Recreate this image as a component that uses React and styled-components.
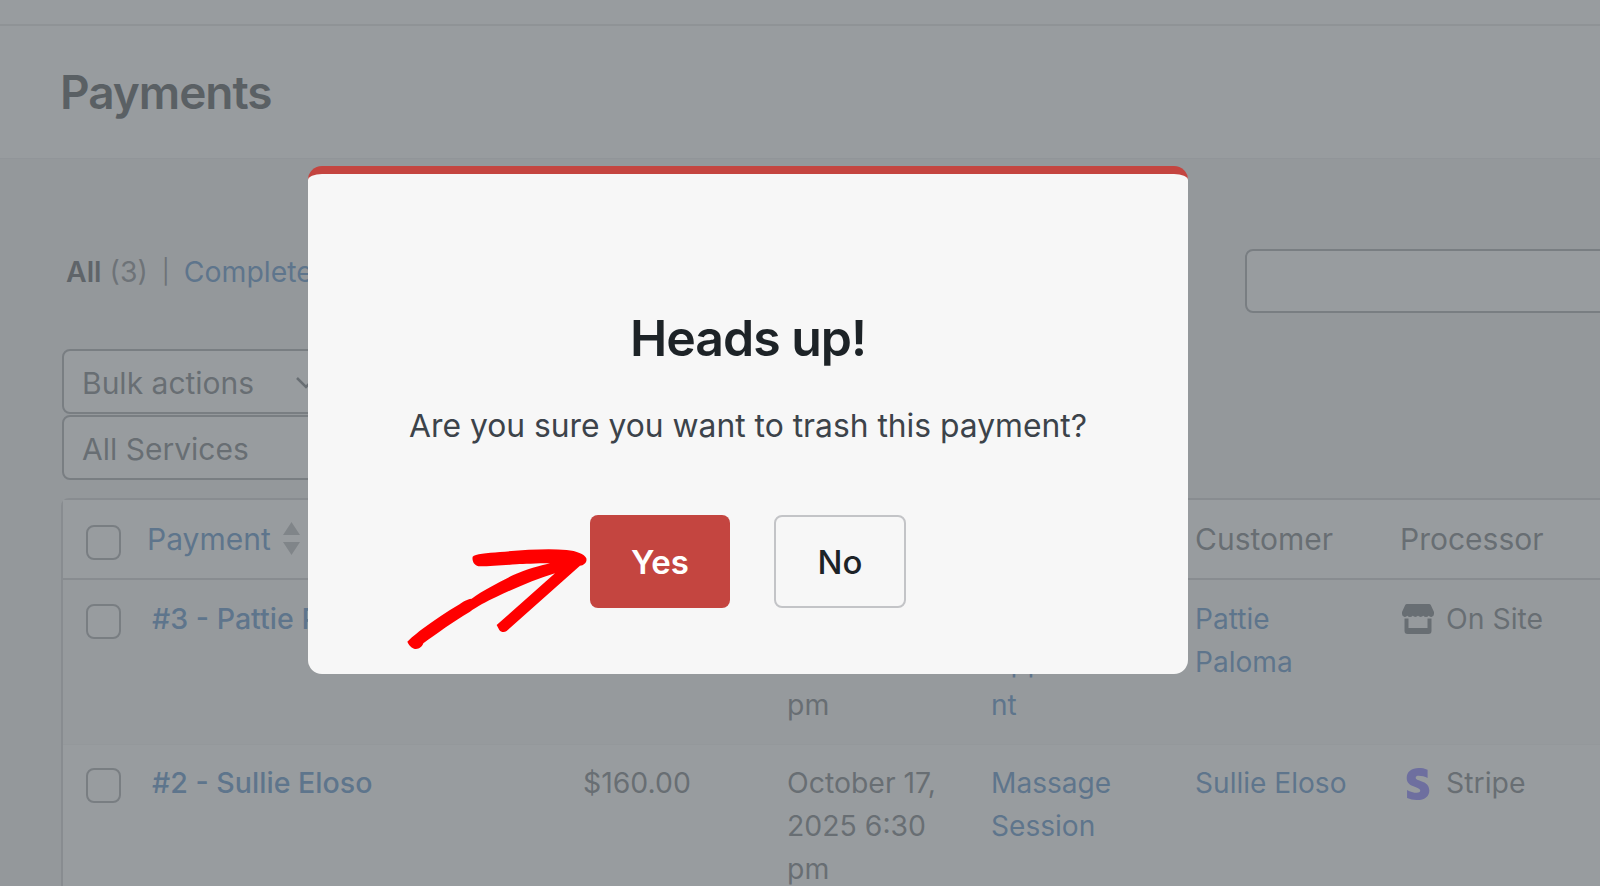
import React from "react";
import styled, { createGlobalStyle } from "styled-components";
import { FaStripeS } from "react-icons/fa";

const GlobalStyle = createGlobalStyle`
  html, body {
    margin: 0;
    padding: 0;
    height: 100%;
    overflow: hidden;
    background: #f0f0f1;
  }
  * {
    box-sizing: border-box;
  }
`;

const Page = styled.div`
  position: relative;
  width: 1600px;
  height: 886px;
  overflow: hidden;
  background: #f0f0f1;
  color: #50575e;
  font-family: Inter, "Liberation Sans", sans-serif;
  font-size: 28.4px;
  line-height: 43px;
`;

const TopBar = styled.div`
  height: 26px;
  background: #fff;
  border-bottom: 2px solid #dcdcde;
`;

const Header = styled.header`
  display: flex;
  align-items: center;
  height: 133px;
  padding: 1px 0 0 60px;
  background: #fff;
  border-bottom: 1px solid #e6e6e8;
`;

const Title = styled.h1`
  margin: 0;
  font-size: 46px;
  font-weight: 600;
  letter-spacing: -1.05px;
  line-height: 1.2;
  color: #1d2327;
`;

const Content = styled.main`
  width: 1660px;
  padding: 90px 15px 0 61px;
`;

const FilterRow = styled.div`
  display: flex;
  align-items: center;
  justify-content: space-between;
  height: 64px;
`;

const Views = styled.div`
  display: flex;
  align-items: center;
  gap: 14px;
  padding: 0 0 20px 5px;
`;

const Strong = styled.strong`
  font-weight: 600;
  color: #2c3338;
`;

const Muted = styled.span`
  color: #646970;
`;

const Divider = styled.span`
  font-size: 24px;
  color: #646970;
`;

const Link = styled.a`
  color: #2a6fb8;
  text-decoration: none;
`;

const Search = styled.div`
  width: 400px;
  height: 64px;
  background: #fff;
  border: 2px solid #8c8f94;
  border-radius: 8px;
`;

const Selects = styled.div`
  display: flex;
  flex-direction: column;
  gap: 1px;
  margin: 36px 0 0 1px;
`;

const Select = styled.div`
  display: flex;
  align-items: center;
  justify-content: space-between;
  width: 273px;
  height: 65px;
  padding: 3px 16px 0 18px;
  font-size: 30px;
  background: #fff;
  border: 2px solid #8c8f94;
  border-radius: 8px;
  color: #50575e;
`;

const Table = styled.section`
  margin-top: 18px;
  background: #fff;
  border: 2px solid #c3c4c7;
  border-radius: 8px;
`;

const Row = styled.div`
  display: grid;
  grid-template-columns: 84px 436px 204px 204px 204px 205px 1fr;
  height: ${(p) => p.$height}px;
  padding-top: ${(p) => p.$top}px;
  border-bottom: ${(p) => (p.$head ? "2px solid #c3c4c7" : "1px solid #f0f0f1")};
  background: ${(p) => (p.$shade ? "#f8f8f8" : "#fff")};
`;

const CheckCell = styled.div`
  padding: 7px 0 0 23px;
`;

const Box = styled.span`
  display: block;
  width: 35px;
  height: 35px;
  background: #fff;
  border: 2px solid #8c8f94;
  border-radius: 8px;
`;

const HeadCell = styled.div`
  display: flex;
  align-items: flex-start;
  gap: 12px;
  font-size: 30px;
  white-space: nowrap;
  color: #50575e;
`;

const Cell = styled.div`
  padding-right: ${(p) => p.$pad || 40}px;
  overflow-wrap: anywhere;
`;

const LinkCell = styled(Cell)`
  padding-top: 1px;
  font-size: 28.1px;
`;

const TitleCell = styled(Cell)`
  padding-left: 5px;
  font-size: 28.6px;
  font-weight: 500;
`;

const Processor = styled.div`
  display: flex;
  align-items: flex-start;
  gap: 12px;
  padding-left: 2px;
  white-space: nowrap;
`;

const IconSlot = styled.span`
  display: flex;
  margin-top: 7px;
  color: ${(p) => p.$color};
`;

const Overlay = styled.div`
  position: absolute;
  inset: 0;
  display: flex;
  justify-content: center;
  padding: 166px 104px 0 0;
  background: rgba(114, 119, 123, 0.73);
`;

const Modal = styled.div`
  position: relative;
  display: flex;
  flex-direction: column;
  align-items: center;
  width: 880px;
  height: 508px;
  padding-top: 132px;
  background: #f7f7f7;
  border-top: 8px solid #c44540;
  border-radius: 14px;
`;

const ModalTitle = styled.h2`
  margin: 0;
  font-size: 50px;
  font-weight: 600;
  letter-spacing: -1px;
  line-height: 64px;
  color: #1d2327;
`;

const ModalText = styled.p`
  margin: 32px 0 0;
  font-size: 31.8px;
  line-height: 48px;
  color: #3c434a;
`;

const Buttons = styled.div`
  display: flex;
  gap: 44px;
  margin-top: 65px;
`;

const Button = styled.button`
  width: ${(p) => p.$width}px;
  height: 93px;
  padding: 0;
  font-family: inherit;
  font-size: 33px;
  font-weight: ${(p) => (p.$danger ? 600 : 500)};
  color: ${(p) => (p.$danger ? "#fff" : "#1d2327")};
  background: ${(p) => (p.$danger ? "#c44540" : "transparent")};
  border: ${(p) => (p.$danger ? "none" : "2px solid #c3c4c7")};
  border-radius: 8px;
`;

const ArrowMark = styled.svg`
  position: absolute;
  left: 82px;
  top: 326px;
  width: 240px;
  height: 160px;
`;

const SortMark = styled.svg`
  margin-top: 4px;
  fill: #a7aaad;
`;

const SortIcon = () => (
  <SortMark width="17" height="34" viewBox="0 0 17 34">
    <path d="M8.5 0 17 13H0z" />
    <path d="M0 20h17L8.5 33z" />
  </SortMark>
);

const Chevron = () => (
  <svg width="22" height="14" viewBox="0 0 22 14" fill="none" stroke="#50575e" strokeWidth="2.5">
    <path d="M2 2l9 9 9-9" />
  </svg>
);

const StoreIcon = () => (
  <svg width="32" height="30" viewBox="0 0 32 30" fill="currentColor">
    <path d="M5 0h22a2 2 0 0 1 1.8 1.1L32 8v2a3 3 0 0 1-5.3 1.8 3.6 3.6 0 0 1-5.4 0 3.6 3.6 0 0 1-5.3 0 3.6 3.6 0 0 1-5.3 0 3.6 3.6 0 0 1-5.4 0A3 3 0 0 1 0 10V8l3.2-6.9A2 2 0 0 1 5 0z" />
    <path
      fillRule="evenodd"
      d="M2.500 14.500h4v9.500h19v-9.500h4V27a3 3 0 0 1-3 3h-21a3 3 0 0 1-3-3z"
    />
  </svg>
);

const Arrow = () => (
  <ArrowMark viewBox="0 0 240 160">
    <path
      transform="scale(0.3333)"
      fill="#ff0000"
      d="M248 170C255 162 290 159 330 156C400 150 470 145 530 150C560 153 583 162 589 175C592 186 582 196 570 197L350 393C343 398 333 397 328 390L320 375L495 220C440 237 380 262 320 290C290 304 260 320 240 335C190 365 140 400 100 430C96 442 85 449 72 446C62 443 55 433 52 425C70 408 85 396 100 385C135 360 170 335 205 315C215 308 228 298 245 296C280 270 330 245 370 225C410 208 450 197 480 190C440 190 400 192 380 193C340 196 300 199 270 199C255 199 245 185 248 170z"
    />
  </ArrowMark>
);

export default function App() {
  return (
    <Page>
      <GlobalStyle />
      <TopBar />
      <Header>
        <Title>Payments</Title>
      </Header>
      <Content>
        <FilterRow>
          <Views>
            <span>
              <Strong>All</Strong> <Muted>(3)</Muted>
            </span>
            <Divider>|</Divider>
            <Link>Completed</Link>
          </Views>
          <Search />
        </FilterRow>
        <Selects>
          <Select>
            Bulk actions
            <Chevron />
          </Select>
          <Select>All Services</Select>
        </Selects>
        <Table>
          <Row $head $height={80} $top={18}>
            <CheckCell>
              <Box />
            </CheckCell>
            <HeadCell>
              <Link>Payment</Link>
              <SortIcon />
            </HeadCell>
            <HeadCell />
            <HeadCell />
            <HeadCell />
            <HeadCell>Customer</HeadCell>
            <HeadCell>Processor</HeadCell>
          </Row>
          <Row $height={165} $top={17} $shade>
            <CheckCell>
              <Box />
            </CheckCell>
            <TitleCell>
              <Link>#3 - Pattie Paloma</Link>
            </TitleCell>
            <Cell>$120.00</Cell>
            <Cell>October 17, 2025 7:30 pm</Cell>
            <LinkCell $pad={56}>
              <Link>Initial Appointment</Link>
            </LinkCell>
            <LinkCell>
              <Link>Pattie Paloma</Link>
            </LinkCell>
            <Processor>
              <IconSlot $color="#50575e">
                <StoreIcon />
              </IconSlot>
              On Site
            </Processor>
          </Row>
          <Row $height={180} $top={16}>
            <CheckCell>
              <Box />
            </CheckCell>
            <TitleCell>
              <Link>#2 - Sullie Eloso</Link>
            </TitleCell>
            <Cell>$160.00</Cell>
            <Cell>October 17, 2025 6:30 pm</Cell>
            <LinkCell $pad={56}>
              <Link>Massage Session</Link>
            </LinkCell>
            <LinkCell>
              <Link>Sullie Eloso</Link>
            </LinkCell>
            <Processor>
              <IconSlot $color="#635bff">
                <FaStripeS size={32} />
              </IconSlot>
              Stripe
            </Processor>
          </Row>
        </Table>
      </Content>
      <Overlay>
        <Modal>
          <ModalTitle>Heads up!</ModalTitle>
          <ModalText>Are you sure you want to trash this payment?</ModalText>
          <Buttons>
            <Button $danger $width={140}>
              Yes
            </Button>
            <Button $width={132}>No</Button>
          </Buttons>
          <Arrow />
        </Modal>
      </Overlay>
    </Page>
  );
}
